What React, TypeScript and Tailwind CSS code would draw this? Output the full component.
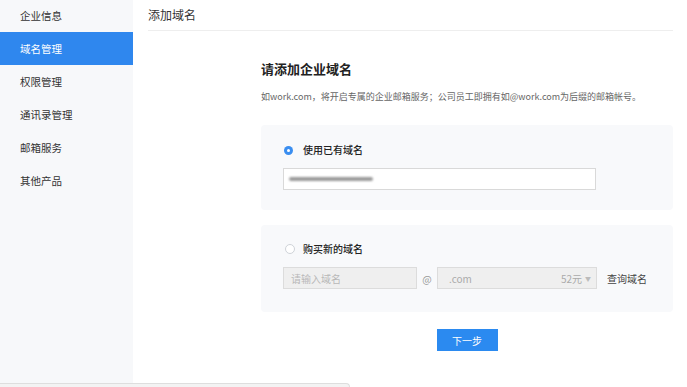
const menu = ['企业信息', '域名管理', '权限管理', '通讯录管理', '邮箱服务', '其他产品']

function Radio({ checked }: { checked: boolean }) {
  return checked ? (
    <span className="flex h-[9px] w-[9px] items-center justify-center rounded-full bg-[#3a8ef0]">
      <span className="h-[3px] w-[3px] rounded-full bg-white" />
    </span>
  ) : (
    <span className="h-[10px] w-[10px] rounded-full border border-[#cfd3d8] bg-white" />
  )
}

export default function App() {
  return (
    <div
      className="flex h-[387px] w-[687px] flex-col overflow-hidden bg-white text-[#333]"
      style={{ fontFamily: '"Noto Sans CJK SC", "Liberation Sans", sans-serif' }}
    >
      <div className="flex h-[383px]">
        {/* Sidebar */}
        <aside className="w-[133px] shrink-0 bg-[#f7f8fa]">
          <ul className="-mt-[1px]">
            {menu.map((item, i) => (
              <li
                key={item}
                className={`flex h-[33px] items-center pl-[20px] text-[10.5px] ${
                  i === 1 ? 'bg-[#2f87ee] text-white' : 'text-[#333]'
                }`}
              >
                {item}
              </li>
            ))}
          </ul>
        </aside>

        {/* Main */}
        <main className="flex-1 pl-[15px] pr-[14px]">
          <div className="flex h-[31px] items-center border-b border-[#eeeeee] text-[12px] text-[#333]">
            添加域名
          </div>

          <div className="pl-[113px]">
            <h2 className="mt-[28px] text-[13px] font-bold leading-[20px] text-[#222]">请添加企业域名</h2>
            <p className="mt-[12px] text-[9px] leading-[12px] text-[#666]">
              如work.com，将开启专属的企业邮箱服务；公司员工即拥有如@work.com为后缀的邮箱帐号。
            </p>

            {/* Use existing domain */}
            <div className="mt-[22px] h-[85px] rounded-[4px] bg-[#f8f9fb] pl-[22px] pt-[18px]">
              <div className="flex items-center gap-[10px] pl-[1px]">
                <Radio checked />
                <span className="text-[10px] font-medium leading-[14px] text-[#222]">使用已有域名</span>
              </div>
              <div className="mt-[11px] flex h-[22px] w-[313px] items-center border border-[#d9d9d9] bg-white pl-[5px]">
                <span className="h-[4px] w-[84px] rounded-full bg-[#9a9a9a] blur-[1.2px]" />
              </div>
            </div>

            {/* Buy new domain */}
            <div className="mt-[15px] h-[87px] rounded-[4px] bg-[#f8f9fb] pl-[22px] pt-[17px]">
              <div className="flex items-center gap-[8px] pl-[2px]">
                <Radio checked={false} />
                <span className="text-[10px] font-medium leading-[14px] text-[#222]">购买新的域名</span>
              </div>
              <div className="mt-[11px] flex items-center">
                <div className="flex h-[22px] w-[134px] items-center border border-[#dcdcdc] bg-[#efefef] pl-[7px] text-[10px] text-[#b8b8b8]">
                  请输入域名
                </div>
                <span className="w-[20px] text-center text-[10px] text-[#999]">@</span>
                <div className="flex h-[22px] w-[160px] items-center justify-between border border-[#dcdcdc] bg-[#efefef] pl-[11px] pr-[5px] text-[10px] text-[#aaa]">
                  <span>.com</span>
                  <span className="flex items-center gap-[3px]">
                    52元
                    <span className="text-[6px] text-[#bbb]">▼</span>
                  </span>
                </div>
                <span className="ml-[10px] text-[10px] text-[#444]">查询域名</span>
              </div>
            </div>

            <div className="mt-[17px] flex justify-center">
              <button className="h-[22px] w-[61px] bg-[#2b8af0] text-[10px] text-white">下一步</button>
            </div>
          </div>
        </main>
      </div>

      {/* horizontal scrollbar */}
      <div className="h-[4px] w-[350px] rounded-tr-[4px] border-t border-r border-[#dedede] bg-[#f3f3f3]" />
    </div>
  )
}
